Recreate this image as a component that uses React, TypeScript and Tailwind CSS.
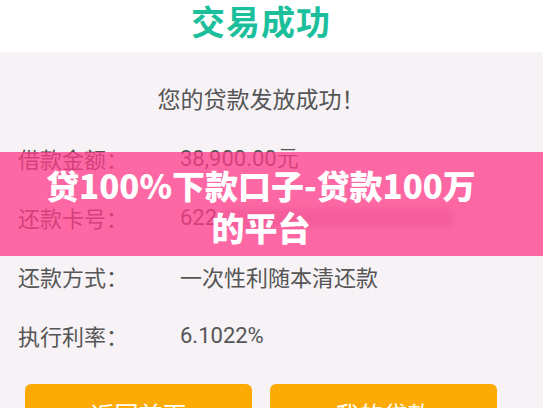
import React from 'react';

const rows = [
  { label: '借款金额：', value: '38,900.00元' },
  { label: '还款卡号：', value: '622', blurred: true },
  { label: '还款方式：', value: '一次性利随本清还款' },
  { label: '执行利率：', value: '6.1022%' },
];

export default function App() {
  return (
    <div
      className="relative w-[543px] h-[408px] overflow-hidden bg-[#f6f2f5]"
      style={{ fontFamily: '"Noto Sans CJK SC", "Noto Sans", sans-serif' }}
    >
      <div className="h-[52px] bg-white pr-[21px] pt-[2px] flex justify-center">
        <h1 className="text-[34px] font-bold text-[#1cbf9c] tracking-[1px] leading-[38px]">交易成功</h1>
      </div>

      <div className="w-[522px]">
        <p className="mt-[30px] text-center text-[23px] leading-[32px] text-[#555]">您的贷款发放成功！</p>

        <div className="mt-[15px] pl-[18px] flex flex-col">
          {rows.map((r) => (
            <div key={r.label} className="h-[59px] flex items-center text-[22px] text-[#555]">
              <span className="w-[162px]">{r.label}</span>
              <span style={r.value.startsWith('38') || r.value.startsWith('6') ? { fontFamily: 'Roboto, sans-serif' } : undefined}>
                {r.value}
              </span>
              {r.blurred && (
                <span className="ml-[6px] h-[20px] w-[230px] bg-[#8a6a78] opacity-30 blur-[3px] rounded-sm" />
              )}
            </div>
          ))}
        </div>

        <div className="mt-[19px] pl-[25px] flex gap-[18px]">
          <button className="w-[227px] h-[48px] rounded-[6px] bg-[#fdaa05] text-white text-[24px] pt-[14px] leading-[32px] flex justify-center">
            返回首页
          </button>
          <button className="w-[227px] h-[48px] rounded-[6px] bg-[#fdaa05] text-white text-[24px] pt-[14px] leading-[32px] flex justify-center">
            我的贷款
          </button>
        </div>
      </div>

      <div className="absolute left-0 right-0 top-[152px] h-[104px] bg-[rgba(255,58,136,0.75)]">
        <div className="w-[522px] pt-[12px] text-center text-white font-black text-[33px] leading-[42px]">
          贷100%下款口子-贷款100万
          <br />
          的平台
        </div>
      </div>
    </div>
  );
}
